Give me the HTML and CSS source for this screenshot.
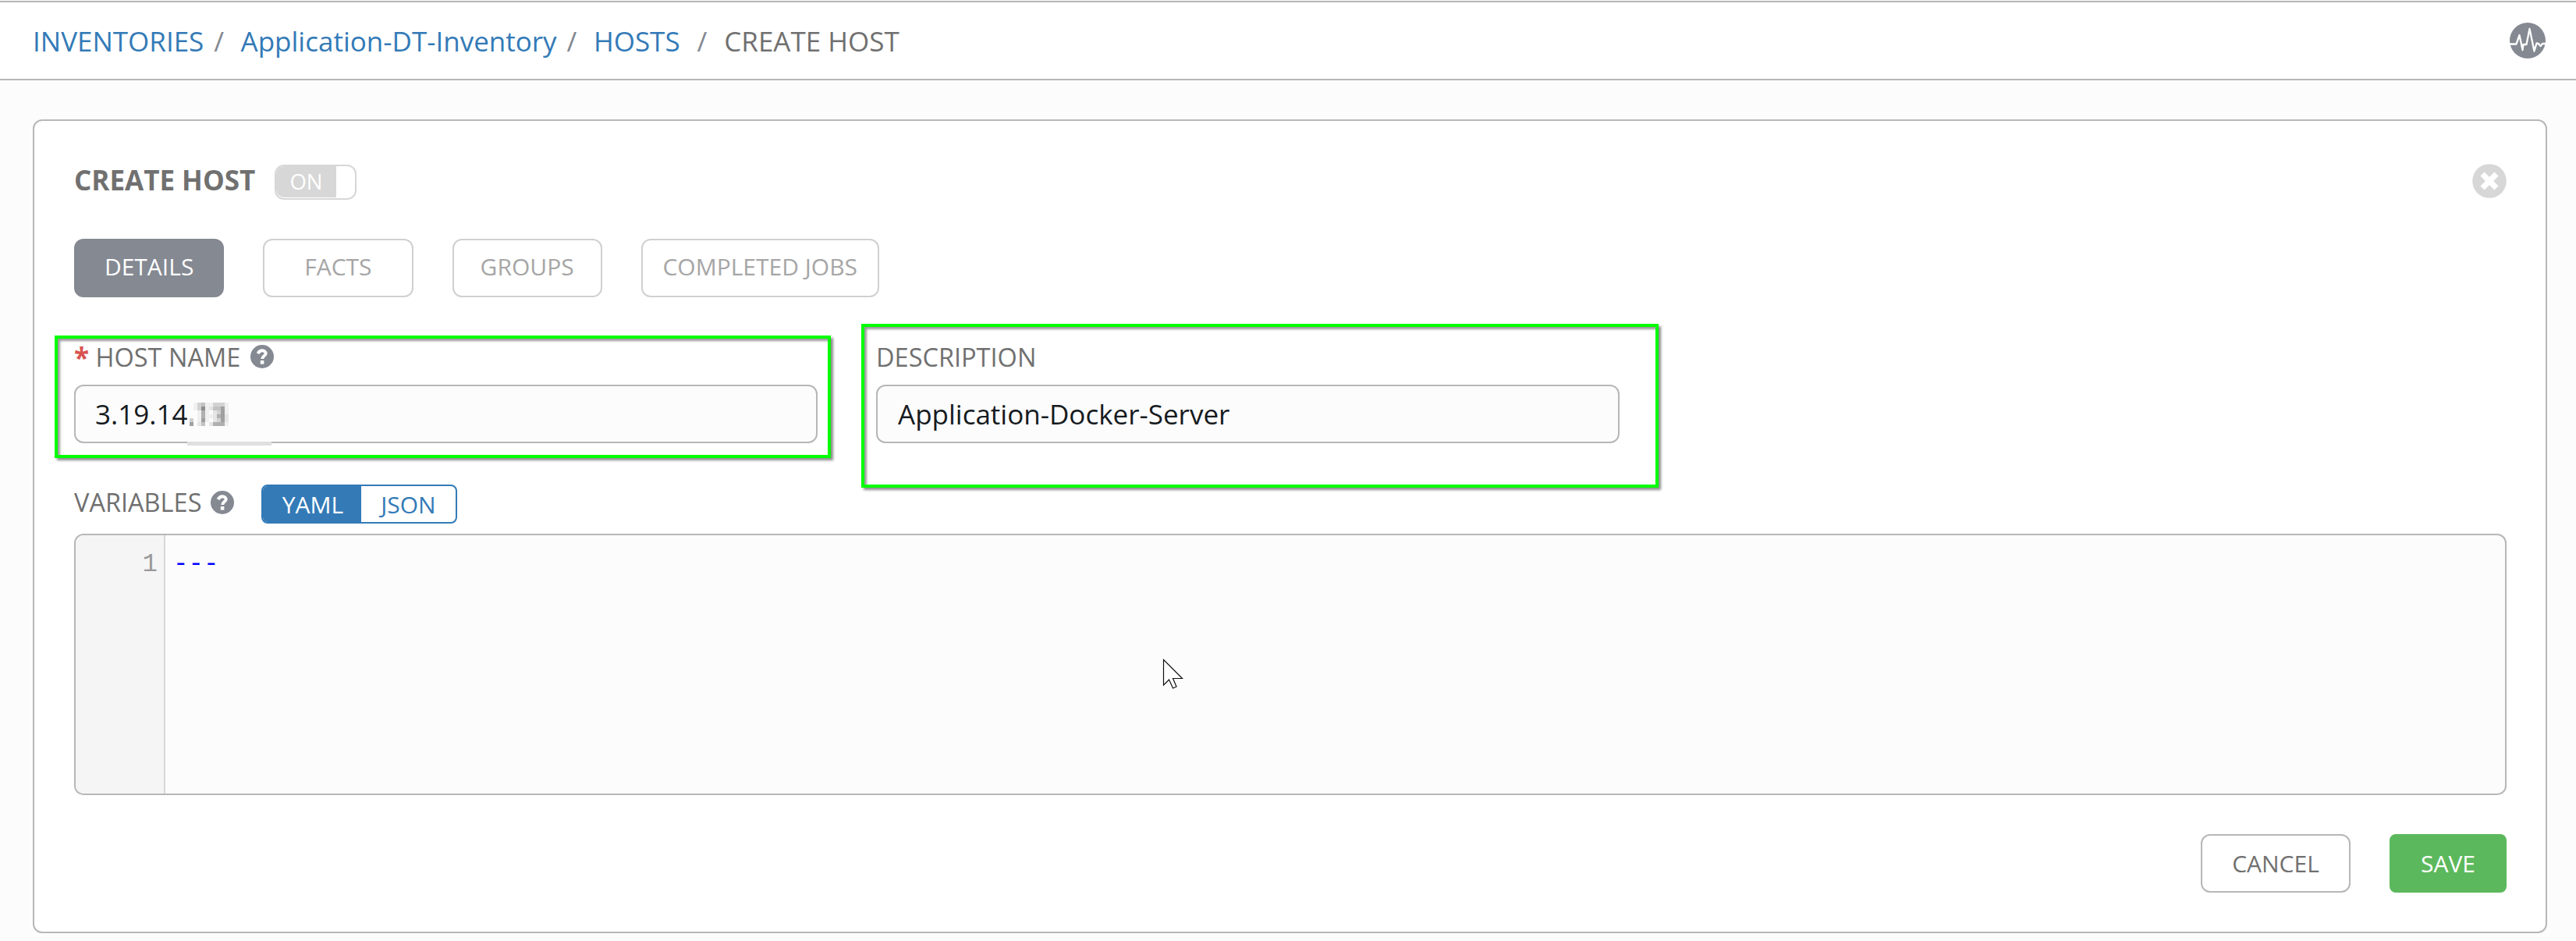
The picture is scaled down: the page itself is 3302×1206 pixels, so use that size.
FILE: index.html
```html
<!DOCTYPE html>
<html lang="en">
<head>
<meta charset="utf-8">
<title>Create Host</title>
<link rel="stylesheet" href="styles.css">
</head>
<body>
<header class="topbar">
  <nav class="crumbs">
    <a class="crumb">INVENTORIES</a><span class="sep s1">/</span><a class="crumb">Application-DT-Inventory</a><span class="sep s2">/</span><a class="crumb">HOSTS</a><span class="sep s3">/</span><span class="current">CREATE HOST</span>
  </nav>
  <svg class="activity" viewBox="0 0 46 46"><circle cx="23" cy="23" r="23" fill="#848992"/><path d="M0 27.5H8.5L12.5 16L16.5 35L17.5 28H21.5L25.5 8L31.5 36.5L34.5 26.5L37 27L39.5 30L42 27H46" fill="none" stroke="#fff" stroke-width="2.3" stroke-linejoin="round"/></svg>
</header>
<main class="panel">
  <div class="panel-head">
    <h1 class="title">CREATE HOST</h1>
    <div class="switch"><span class="switch-on">ON</span></div>
    <svg class="close" viewBox="0 0 44 44"><circle cx="22" cy="22" r="21.8" fill="#d7d7d7"/><path d="M13 13L31 31M31 13L13 31" stroke="#fff" stroke-width="7.4" fill="none"/></svg>
  </div>
  <div class="tabs">
    <button class="tab active">DETAILS</button>
    <button class="tab">FACTS</button>
    <button class="tab">GROUPS</button>
    <button class="tab wide">COMPLETED JOBS</button>
  </div>
  <div class="fields">
    <div class="field">
      <label class="label"><span class="star">*</span><span class="t-host">HOST NAME</span><svg class="help" viewBox="0 0 30 30"><circle cx="15" cy="15" r="15" fill="#848992"/><path d="M9.6 11.2C11 8.3 12.8 7.3 15.2 7.3C18 7.3 19.7 9 19.7 11.1C19.7 14 15.2 14.2 15.2 18" fill="none" stroke="#fff" stroke-width="4"/><rect x="12.8" y="20" width="4.6" height="4.6" fill="#fff"/></svg></label>
      <div class="input input-host">3.19.14<span class="mask">
        <svg class="mosaic" viewBox="240 516 108 55" shape-rendering="crispEdges"><path fill="#fcfcfc" d="M240 516h108v50h-108z"/><path fill="#e0e0e0" d="M240 566h108v5h-108z"/><path fill="#cfcfcf" d="M243 536h5v5h-5z"/><path fill="#a2a2a2" d="M243 541h5v5h-5z"/><path fill="#f0f0f0" d="M248 516h5v10h-5zM253 526h5v15h-5zM263 516h5v25h-5zM268 516h5v5h-5zM268 531h5v5h-5zM288 516h5v15h-5zM288 541h5v5h-5z"/><path fill="#e5e5e5" d="M253 541h5v5h-5zM268 521h5v5h-5zM268 541h5v5h-5zM273 526h5v15h-5zM288 531h5v10h-5z"/><path fill="#d2d2d2" d="M253 516h5v10h-5zM273 516h15v5h-15zM278 526h5v5h-5zM278 536h5v5h-5z"/><path fill="#c2c2c2" d="M258 516h5v5h-5zM258 541h5v5h-5zM273 521h10v5h-10z"/><path fill="#b0b0b0" d="M258 526h5v10h-5zM278 531h5v5h-5zM273 541h15v5h-15z"/><path fill="#a0a0a0" d="M258 536h5v5h-5zM283 521h5v20h-5z"/><path fill="#8e8e8e" d="M258 521h5v5h-5z"/></svg></span></div>
    </div>
    <div class="field">
      <label class="label">DESCRIPTION</label>
      <div class="input">Application-Docker-Server</div>
    </div>
  </div>
  <div class="vars-head">
    <div class="vars-label"><span class="t-vars">VARIABLES</span><svg class="help" viewBox="0 0 30 30"><circle cx="15" cy="15" r="15" fill="#848992"/><path d="M9.6 11.2C11 8.3 12.8 7.3 15.2 7.3C18 7.3 19.7 9 19.7 11.1C19.7 14 15.2 14.2 15.2 18" fill="none" stroke="#fff" stroke-width="4"/><rect x="12.8" y="20" width="4.6" height="4.6" fill="#fff"/></svg></div>
    <div class="format"><span class="fmt on">YAML</span><span class="fmt">JSON</span></div>
  </div>
  <div class="editor"><div class="gutter">1</div><div class="code">---</div></div>
  <div class="actions">
    <button class="btn cancel">CANCEL</button>
    <button class="btn save">SAVE</button>
  </div>
</main>
<div class="mark mark-host"></div>
<div class="mark mark-desc"></div>
<svg class="pointer" viewBox="0 0 27 40"><path d="M1.5 1.5V34L8.5 27L13.5 38L18 36L13.5 25.5H25.5Z" fill="#fff" stroke="#111" stroke-width="1.2"/></svg>
</body>
</html>
```
FILE: styles.css
```css
* { box-sizing: border-box; }
body {
  margin: 0;
  padding-top: 1px;
  width: 3302px;
  height: 1206px;
  overflow: hidden;
  position: relative;
  background: #fcfcfc;
  font-family: "Open Sans", "Noto Sans", sans-serif;
  font-size: 35px;
  color: #707070;
}
button { font: inherit; padding: 0; margin: 0; cursor: pointer; }
svg { display: block; flex: none; }

.topbar {
  height: 102px;
  padding: 0 39px 0 42px;
  display: flex;
  align-items: center;
  justify-content: space-between;
  background: #fff;
  border-top: 2px solid #b7b7b7;
  border-bottom: 2px solid #b7b7b7;
}
.crumbs { display: flex; white-space: nowrap; line-height: 47px; padding-top: 1px; }
.crumb { color: #337ab7; }
.sep { color: #848992; }
.s1, .s2 { margin: 0 21.5px 0 12.9px; }
.s3 { margin: 0 21.8px 0 22px; }
.activity { width: 46px; height: 46px; }

.panel {
  margin: 50px 37px 0 42px;
  height: 1043px;
  padding: 56px 50px 50px 51px;
  background: #fff;
  border: 2px solid #b7b7b7;
  border-radius: 12px;
}
.panel-head { display: flex; align-items: flex-start; height: 45px; }
.title { margin: -4px 26px 0 0; width: 231px; font-size: 35px; font-weight: 700; line-height: 47px; white-space: nowrap; }
.switch {
  width: 105px;
  height: 45px;
  border: 2px solid #d7d7d7;
  border-radius: 12px;
  overflow: hidden;
}
.switch-on {
  display: block;
  width: 77px;
  height: 40px;
  border-radius: 10px 0 0 10px;
  background: #d7d7d7;
  color: #fff;
  font-size: 27.5px;
  line-height: 39px;
  text-align: center;
}
.close { width: 44px; height: 44px; margin: -1px 0 0 auto; }

.tabs { display: flex; gap: 50px; margin-top: 50px; }
.tab {
  width: 192.25px;
  height: 75px;
  padding-bottom: 3px;
  border: 2px solid #d0d0d0;
  border-radius: 12px;
  background: #fff;
  color: #a6a6a6;
  font-size: 30px;
  line-height: 68px;
}
.tab.wide { width: 305px; }
.tab.active { background: #848992; border-color: #848992; color: #fff; }

.fields { display: flex; gap: 75px; margin-top: 52px; }
.field { width: 953px; }
.label { display: flex; align-items: center; height: 48px; font-size: 32.5px; white-space: nowrap; }
.star { width: 27.5px; color: #d9534f; font-size: 35px; font-weight: 700; }
.t-host { width: 198.5px; }
.help { width: 30px; height: 30px; }
.input {
  display: flex;
  height: 75px;
  margin-top: 12px;
  padding: 0 26px;
  border: 2px solid #b7b7b7;
  border-radius: 12px;
  background: #fcfcfc;
  color: #161b1f;
  line-height: 71px;
}
.input-host { padding-left: 25px; }
.mask { position: relative; }
.mosaic { position: absolute; left: 0; top: 21px; width: 108px; height: 55px; }

.vars-head { display: flex; align-items: center; height: 50px; margin-top: 53px; font-size: 32.5px; }
.vars-label { display: flex; align-items: center; padding-bottom: 5px; }
.t-vars { width: 175px; }
.format {
  display: flex;
  width: 251px;
  height: 50px;
  margin-left: 35px;
  border: 2px solid #337ab7;
  border-radius: 8px;
  overflow: hidden;
  background: #fff;
}
.fmt { flex: 1; color: #337ab7; font-size: 30px; line-height: 47px; text-align: center; }
.fmt.on { flex: 0 0 126px; padding-left: 2px; background: #337ab7; color: #fff; }

.editor {
  display: flex;
  height: 335px;
  margin-top: 13px;
  border: 2px solid #b7b7b7;
  border-radius: 12px;
  overflow: hidden;
  background: #fcfcfc;
  font-family: "Liberation Mono", monospace;
  font-size: 32.5px;
  line-height: 45px;
}
.gutter {
  width: 115px;
  padding: 15px 8px 0 0;
  border-right: 2px solid #d7d7d7;
  background: #f5f5f5;
  color: #999;
  text-align: right;
}
.code { padding: 15px 0 0 10px; color: #00f; }

.actions { display: flex; justify-content: flex-end; gap: 50px; margin-top: 50px; }
.btn { height: 75px; font-size: 30px; line-height: 68px; }
.cancel { width: 192px; border: 2px solid #b7b7b7; border-radius: 12px; background: #fff; color: #707070; }
.save { width: 150px; border: 2px solid #5cb85c; border-radius: 8px; background: #5cb85c; color: #fff; }

.mark { position: absolute; border: 4px solid #0f0; box-shadow: 3px 3px 3px rgba(0,0,0,.45), inset 3px 3px 3px rgba(0,0,0,.4); }
.mark-host { left: 70px; top: 430px; width: 995px; height: 157px; }
.mark-desc { left: 1104px; top: 415px; width: 1022px; height: 210px; }
.pointer { position: absolute; left: 1490px; top: 844px; width: 27px; height: 40px; }
```
